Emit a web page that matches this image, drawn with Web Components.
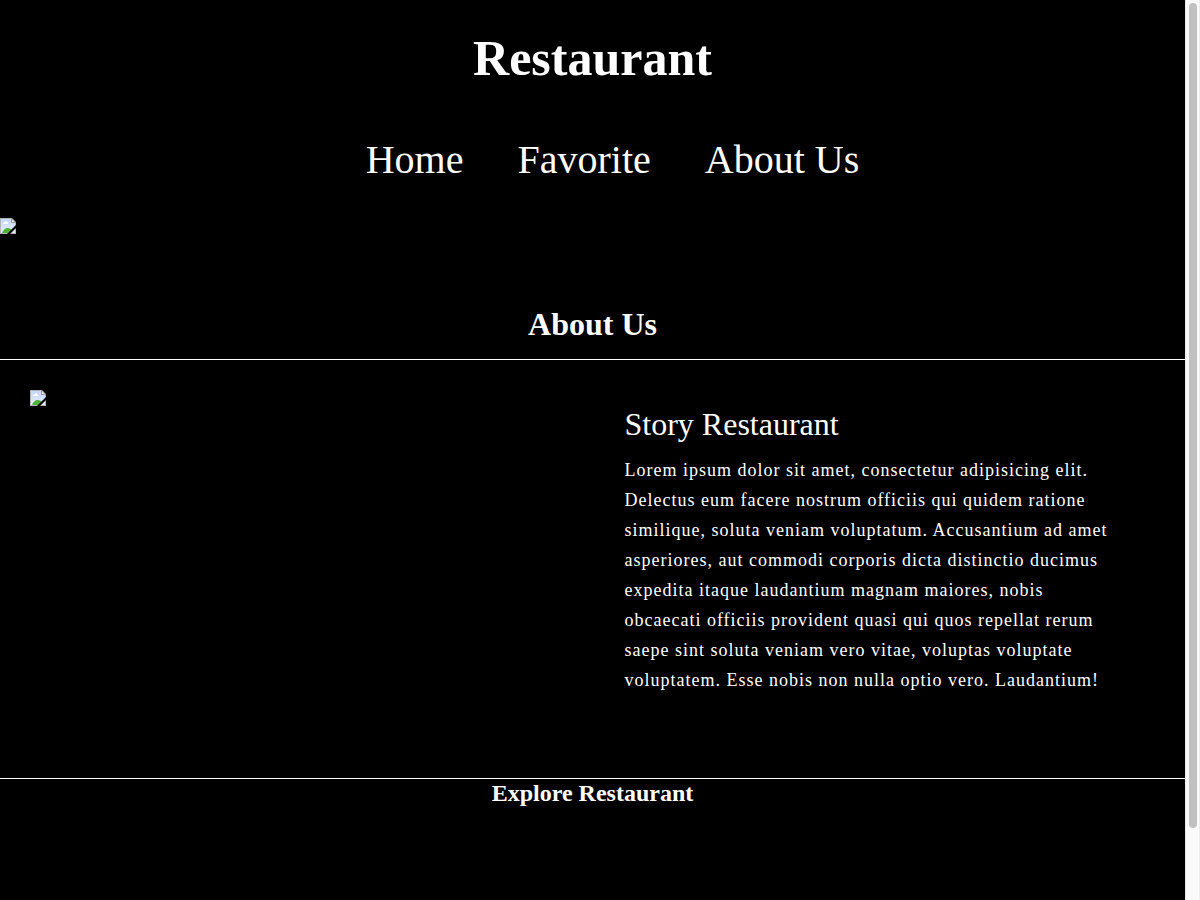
<!DOCTYPE html>
<html lang="en">
<head>
<meta charset="utf-8">
<title>Restaurant</title>
<style>
html, body { margin: 0; height: 100%; background: #000; overflow: hidden; }
body { font-family: "Liberation Serif", "Times New Roman", serif; color: #fff; }
</style>
</head>
<body>
<page-frame>
  <site-header>
    <a href="#home">Home</a>
    <a href="#favorite">Favorite</a>
    <a href="#about">About Us</a>
  </site-header>
  <hero-banner></hero-banner>
  <about-section id="about" heading="About Us">
    <story-card heading="Story Restaurant">Lorem ipsum dolor sit amet, consectetur adipisicing elit. Delectus eum facere nostrum officiis qui quidem ratione similique, soluta veniam voluptatum. Accusantium ad amet asperiores, aut commodi corporis dicta distinctio ducimus expedita itaque laudantium magnam maiores, nobis obcaecati officiis provident quasi qui quos repellat rerum saepe sint soluta veniam vero vitae, voluptas voluptate voluptatem. Esse nobis non nulla optio vero. Laudantium!</story-card>
  </about-section>
  <explore-section>Explore Restaurant</explore-section>
</page-frame>
<script>
function define(name, html) {
  customElements.define(name, class extends HTMLElement {
    constructor() {
      super();
      this.attachShadow({ mode: 'open' }).innerHTML = html;
    }
    connectedCallback() {
      const title = this.shadowRoot.querySelector('[data-heading]');
      if (title) title.textContent = this.getAttribute('heading');
    }
  });
}

define('missing-image', `
<style>
:host { display: block; width: 16px; height: 16px; }
svg { display: block; }
</style>
<svg width="16" height="16" viewBox="0 0 16 16" role="img" aria-label="Image unavailable">
  <defs><linearGradient id="sky" x1="0" y1="0" x2="0" y2="1"><stop offset="0" stop-color="#c3d7fb"/><stop offset="1" stop-color="#e6eefc"/></linearGradient></defs>
  <path d="M0 0H12L16 4V16H0Z" fill="#b4b4b4"/>
  <path d="M1 1H11L15 5V15H1Z" fill="url(#sky)"/>
  <path d="M3 6C3 5 4 4 5 4C5 3 7 3 7 4C8 4 8 5 8 6Z" fill="#fff"/>
  <path d="M2 15C3 12 5 10 8 10C10 10 11 11 12 12L11 15Z" fill="#4fb236"/>
  <path d="M11 1V5H15Z" fill="#fff"/>
  <path d="M11 0V5H16V4H12V0Z" fill="#999"/>
  <path d="M7 16L16 7V10L10 16Z" fill="#000"/>
</svg>`);

define('scroll-track', `
<style>
:host { display: block; box-sizing: border-box; padding: 3px 2px 0 3px; background: #fafafa; border-left: 1px solid #e8e8e8; border-right: 1px solid #ededed; }
div { height: 92%; border-radius: 4px; background: #c1c1c1; }
</style>
<div></div>`);

define('page-frame', `
<style>
:host { display: grid; grid-template-columns: minmax(0, 1fr) 15px; height: 100vh; }
main { overflow: hidden auto; scrollbar-width: none; background: #000; }
</style>
<main><slot></slot></main>
<scroll-track></scroll-track>`);

define('site-header', `
<style>
:host { display: block; }
h1 { margin: 0; padding: 30px 0; text-align: center; font-size: 50px; line-height: 56px; }
nav { display: flex; flex-wrap: wrap; justify-content: center; gap: 54px; padding: 20px 0 34px 40px; }
::slotted(a) { color: #fff; text-decoration: none; font-size: 40px; line-height: 48px; }
</style>
<header><h1>Restaurant</h1><nav><slot></slot></nav></header>`);

define('hero-banner', `
<style>:host { display: block; }</style>
<missing-image></missing-image>`);

define('about-section', `
<style>
:host { display: block; margin-top: 72px; }
h2 { margin: 0; padding-bottom: 17px; text-align: center; font-size: 32px; line-height: 36px; border-bottom: 1px solid #fff; }
.columns { display: grid; grid-template-columns: 1fr 1fr; padding: 30px; min-height: 358px; border-bottom: 1px solid #fff; }
</style>
<section>
  <h2 data-heading></h2>
  <div class="columns"><missing-image></missing-image><slot></slot></div>
</section>`);

define('story-card', `
<style>
:host { display: block; padding: 16px 32px; }
h3 { margin: 0 0 13px; font-size: 32px; line-height: 36px; font-weight: 400; }
p { margin: 0; font-size: 18px; line-height: 30px; letter-spacing: 1px; }
</style>
<h3 data-heading></h3>
<p><slot></slot></p>`);

define('explore-section', `
<style>
:host { display: block; }
h2 { margin: 0; text-align: center; font-size: 24px; line-height: 28px; }
</style>
<h2><slot></slot></h2>`);
</script>
</body>
</html>
